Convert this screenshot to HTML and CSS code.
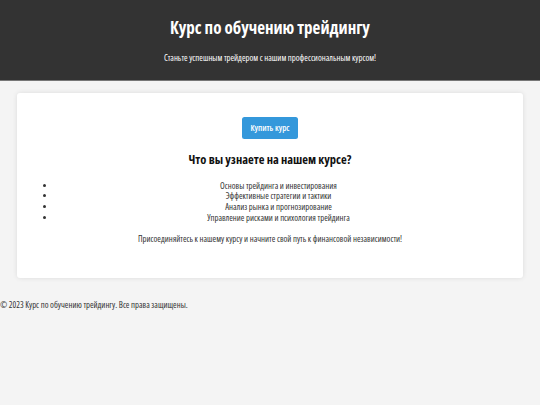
FILE: index.html
```html
<!DOCTYPE html>
<html lang="ru">
<head>
<meta charset="utf-8">
<title>Курс по обучению трейдингу</title>
<link rel="stylesheet" href="styles.css">
</head>
<body>
<header class="site-header">
  <h1 class="site-title">Курс по обучению трейдингу</h1>
  <p class="site-tagline">Станьте успешным трейдером с нашим профессиональным курсом!</p>
</header>
<main class="card">
  <div class="cta">
    <a class="btn" href="#">Купить курс</a>
  </div>
  <h2 class="card-title">Что вы узнаете на нашем курсе?</h2>
  <ul class="topics">
    <li>Основы трейдинга и инвестирования</li>
    <li>Эффективные стратегии и тактики</li>
    <li>Анализ рынка и прогнозирование</li>
    <li>Управление рисками и психология трейдинга</li>
  </ul>
  <p class="card-note">Присоединяйтесь к нашему курсу и начните свой путь к финансовой независимости!</p>
</main>
<footer class="site-footer">
  <p class="copyright">© 2023 Курс по обучению трейдингу. Все права защищены.</p>
</footer>
</body>
</html>
```

FILE: styles.css
```css
* {
  box-sizing: border-box;
}

html, body {
  margin: 0;
  padding: 0;
}

body {
  background: #f4f4f4;
  color: #333;
  font-family: "Open Sans", "Liberation Sans", Arial, sans-serif;
  font-stretch: 75%;
  font-size: 8.7px;
  line-height: 10.67px;
}

.site-header {
  background: #333;
  color: #fff;
  text-align: center;
  padding: 18px 0 16px;
  border-bottom: 1px solid #777;
}

.site-title {
  margin: 0 0 15px;
  font-size: 17px;
  line-height: 20px;
  font-weight: bold;
}

.site-tagline {
  margin: 0;
  line-height: 11px;
}

.card {
  display: block;
  margin: 12px 17px 0;
  padding: 24px 22px 34px;
  background: #fff;
  border-radius: 3px;
  box-shadow: 0 0 5px rgba(0, 0, 0, 0.1);
  text-align: center;
}

.cta {
  display: flex;
  justify-content: center;
}

.btn {
  display: block;
  padding: 6px 8.5px;
  line-height: 10px;
  background: #3498db;
  color: #fff;
  font-weight: 600;
  text-decoration: none;
  border-radius: 2.5px;
}

.card-title {
  margin: 13px 0 12.7px;
  font-size: 12.5px;
  line-height: 16px;
  font-weight: bold;
  color: #111;
}

.topics {
  margin: 0;
  padding: 0 0 0 17px;
}

.topics li {
  line-height: 10.67px;
}

.card-note {
  margin: 10.4px 0 0;
}

.site-footer {
  margin-top: 21.7px;
}

.copyright {
  margin: 0;
}
```
